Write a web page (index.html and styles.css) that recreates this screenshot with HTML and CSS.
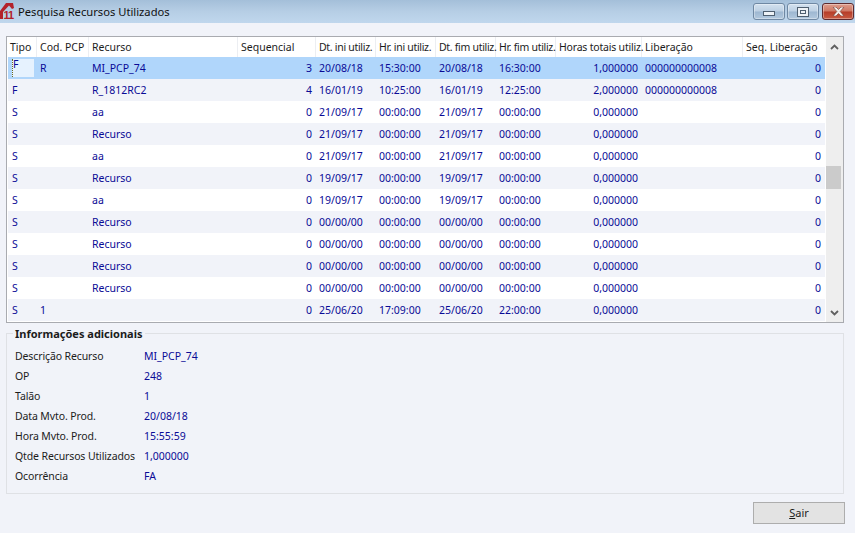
FILE: index.html
```html
<!DOCTYPE html>
<html lang="pt">
<head>
<meta charset="utf-8">
<title>Pesquisa Recursos Utilizados</title>
<link rel="stylesheet" href="styles.css">
</head>
<body>
<div class="window">
  <header class="titlebar">
    <svg class="app-icon" width="16" height="18" viewBox="0 0 16 18">
      <path d="M0 9 L6 1 L13 1 L14 6 L12 7 L9 3.5 L3 10 L3 17 L0 17 Z" fill="#b3222b"/>
      <text x="3.5" y="17" class="app-icon-text">11</text>
    </svg>
    <span class="title">Pesquisa Recursos Utilizados</span>
    <div class="controls">
      <div class="ctl"><span class="glyph-min"></span></div>
      <div class="ctl"><span class="glyph-max"></span></div>
      <div class="ctl ctl-close">
        <svg width="13" height="9" viewBox="0 0 13 9"><path d="M1 0 H4 L6.5 2.5 L9 0 H12 L8.2 4.5 L12 9 H9 L6.5 6.5 L4 9 H1 L4.8 4.5 Z" fill="#f2ece8" stroke="#6e3a32" stroke-width=".6"/></svg>
      </div>
    </div>
  </header>

  <section class="grid-box">
    <div class="grid-main">
      <div class="row head">
        <div>Tipo</div><div>Cod. PCP</div><div>Recurso</div><div>Sequencial</div><div class="u">Dt. ini utiliz.</div><div class="u">Hr. ini utiliz.</div><div class="u">Dt. fim utiliz.</div><div class="u">Hr. fim utiliz.</div><div class="u2">Horas totais utiliz.</div><div>Liberação</div><div>Seq. Liberação</div>
      </div>
      <div class="row sel"><div class="first"><span class="cursor">F</span></div><div>R</div><div>MI_PCP_74</div><div class="r">3</div><div>20/08/18</div><div>15:30:00</div><div>20/08/18</div><div>16:30:00</div><div class="r">1,000000</div><div>000000000008</div><div class="r">0</div></div>
      <div class="row alt"><div class="first">F</div><div></div><div>R_1812RC2</div><div class="r">4</div><div>16/01/19</div><div>10:25:00</div><div>16/01/19</div><div>12:25:00</div><div class="r">2,000000</div><div>000000000008</div><div class="r">0</div></div>
      <div class="row"><div class="first">S</div><div></div><div>aa</div><div class="r">0</div><div>21/09/17</div><div>00:00:00</div><div>21/09/17</div><div>00:00:00</div><div class="r">0,000000</div><div></div><div class="r">0</div></div>
      <div class="row alt"><div class="first">S</div><div></div><div>Recurso</div><div class="r">0</div><div>21/09/17</div><div>00:00:00</div><div>21/09/17</div><div>00:00:00</div><div class="r">0,000000</div><div></div><div class="r">0</div></div>
      <div class="row"><div class="first">S</div><div></div><div>aa</div><div class="r">0</div><div>21/09/17</div><div>00:00:00</div><div>21/09/17</div><div>00:00:00</div><div class="r">0,000000</div><div></div><div class="r">0</div></div>
      <div class="row alt"><div class="first">S</div><div></div><div>Recurso</div><div class="r">0</div><div>19/09/17</div><div>00:00:00</div><div>19/09/17</div><div>00:00:00</div><div class="r">0,000000</div><div></div><div class="r">0</div></div>
      <div class="row"><div class="first">S</div><div></div><div>aa</div><div class="r">0</div><div>19/09/17</div><div>00:00:00</div><div>19/09/17</div><div>00:00:00</div><div class="r">0,000000</div><div></div><div class="r">0</div></div>
      <div class="row alt"><div class="first">S</div><div></div><div>Recurso</div><div class="r">0</div><div>00/00/00</div><div>00:00:00</div><div>00/00/00</div><div>00:00:00</div><div class="r">0,000000</div><div></div><div class="r">0</div></div>
      <div class="row"><div class="first">S</div><div></div><div>Recurso</div><div class="r">0</div><div>00/00/00</div><div>00:00:00</div><div>00/00/00</div><div>00:00:00</div><div class="r">0,000000</div><div></div><div class="r">0</div></div>
      <div class="row alt"><div class="first">S</div><div></div><div>Recurso</div><div class="r">0</div><div>00/00/00</div><div>00:00:00</div><div>00/00/00</div><div>00:00:00</div><div class="r">0,000000</div><div></div><div class="r">0</div></div>
      <div class="row"><div class="first">S</div><div></div><div>Recurso</div><div class="r">0</div><div>00/00/00</div><div>00:00:00</div><div>00/00/00</div><div>00:00:00</div><div class="r">0,000000</div><div></div><div class="r">0</div></div>
      <div class="row alt"><div class="first">S</div><div>1</div><div></div><div class="r">0</div><div>25/06/20</div><div>17:09:00</div><div>25/06/20</div><div>22:00:00</div><div class="r">0,000000</div><div></div><div class="r">0</div></div>
    </div>
    <div class="scrollbar">
      <svg class="arrow" width="9" height="6" viewBox="0 0 9 6"><path d="M1 5 L4.5 1.5 L8 5" fill="none" stroke="#606060" stroke-width="1.8"/></svg>
      <div class="thumb"></div>
      <svg class="arrow" width="9" height="6" viewBox="0 0 9 6"><path d="M1 1 L4.5 4.5 L8 1" fill="none" stroke="#606060" stroke-width="1.8"/></svg>
    </div>
  </section>

  <fieldset class="info">
    <legend>Informações adicionais</legend>
    <dl class="info-list">
      <div class="info-row"><dt>Descrição Recurso</dt><dd>MI_PCP_74</dd></div>
      <div class="info-row"><dt>OP</dt><dd>248</dd></div>
      <div class="info-row"><dt>Talão</dt><dd>1</dd></div>
      <div class="info-row"><dt>Data Mvto. Prod.</dt><dd>20/08/18</dd></div>
      <div class="info-row"><dt>Hora Mvto. Prod.</dt><dd>15:55:59</dd></div>
      <div class="info-row"><dt>Qtde Recursos Utilizados</dt><dd>1,000000</dd></div>
      <div class="info-row"><dt>Ocorrência</dt><dd>FA</dd></div>
    </dl>
  </fieldset>

  <footer class="footer">
    <button class="btn" type="button"><u>S</u>air</button>
  </footer>
</div>
</body>
</html>
```
FILE: styles.css
```css
* { box-sizing: border-box; }
html, body { margin: 0; padding: 0; height: 100%; }
body {
  background: #f1f3f9;
  font-family: "Noto Sans", "DejaVu Sans", sans-serif;
  font-size: 10.5px;
  color: #1c1c1c;
  overflow: hidden;
}
.window { width: 855px; height: 533px; display: flex; flex-direction: column; }

.titlebar {
  height: 23px;
  flex: none;
  display: flex;
  align-items: flex-start;
  background: linear-gradient(180deg, #a4bfd9 0%, #b6cee5 50%, #c0d7ed 100%);
}
.app-icon { margin: 2px 0 0 0; flex: none; }
.app-icon-text { font: bold 11px "Liberation Sans", sans-serif; letter-spacing: -1px; fill: #b3222b; }
.title { margin: 4px 0 0 2px; font-size: 11.2px; line-height: 16px; color: #111; }
.controls { margin: 3px 0 0 auto; padding-right: 1px; display: flex; gap: 2px; }
.ctl {
  width: 32px; height: 17px;
  border: 1px solid #6f88a3;
  border-radius: 3px;
  background: linear-gradient(180deg, #d3e1ef 0%, #bdd0e3 48%, #9db7d1 52%, #b3c9de 100%);
  display: flex; align-items: center; justify-content: center;
  box-shadow: inset 0 0 0 1px rgba(255,255,255,.35);
}
.ctl-close {
  margin-left: 1px;
  border-color: #5d2a2e;
  background: linear-gradient(180deg, #dd9d8d 0%, #cf7763 48%, #b63c28 52%, #c85a42 100%);
}
.glyph-min { display: block; width: 12px; height: 5px; margin-top: 4px; background: #eef2f6; border: 1px solid #4f5f70; }
.glyph-max { display: block; width: 12px; height: 10px; background: #eef2f6; border: 1px solid #4f5f70; box-shadow: inset 0 0 0 2px #eef2f6, inset 0 0 0 3px #4f5f70; }

.grid-box {
  margin: 13px 11px 0 6px;
  width: 838px;
  height: 287px;
  flex: none;
  display: flex;
  background: #fff;
  border: 1px solid #a9abb0;
}
.grid-main { width: 818px; padding-left: 1px; flex: none; overflow: hidden; }
.row {
  display: grid;
  grid-template-columns: 29px 52px 149px 78px 60px 60px 60px 60px 86px 101px 82px;
  height: 22px;
  line-height: 21px;
  color: #0a0a96;
  background: #fff;
}
.row > div { padding: 1px 4px 0 3px; white-space: nowrap; overflow: hidden; }
.row > .r { text-align: right; }
.row.alt { background: #f1f3f9; }
.row.sel { background: #b0d6fb; }
.row.head { height: 20px; line-height: 20px; color: #1c1c1c; background: #fff; }
.row.head > div { padding: 0 0 0 3px; overflow: visible; border-right: 1px solid #eceef2; }
.row.head > div:first-child { padding-left: 2px; }
.row.head > div:last-child { border-right: 0; }
.row.head > .u { letter-spacing: -0.3px; }
.row.head > .u2 { letter-spacing: -0.2px; }
.row > .first { padding-left: 4px; }
.row.sel > .first { padding: 0 0 0 4px; }
.cursor {
  display: block;
  width: 22px; height: 18px; margin-top: 2px;
  line-height: 11px;
  background: #e6f2fe;
  border-left: 1px dotted #6a6a20;
}
.scrollbar {
  width: 17px;
  margin-left: 1px;
  background: #eeeeee;
  display: flex; flex-direction: column; align-items: center;
}
.arrow { flex: none; margin-top: 7px; }
.scrollbar .arrow:last-child { margin-top: auto; margin-bottom: 6px; }
.thumb {
  width: 15px; height: 23px; background: #cbcbcb;
  margin-top: 116px; flex: none;
  align-self: flex-start;
}

.info {
  margin: 4px 11px 0 6px;
  padding: 0;
  width: 838px;
  height: 167px;
  flex: none;
  border: 1px solid #dfe1e5;
  min-inline-size: 0;
}
.info legend { margin-left: 6px; padding: 0 2px; font-weight: bold; font-size: 11px; line-height: 13px; color: #1c1c1c; }
.info-list { margin: 6px 0 0; padding: 0; }
.info-row { display: flex; height: 20px; line-height: 20px; }
.info-row dt { width: 129px; margin-left: 8px; flex: none; letter-spacing: -0.12px; }
.info-row dd { margin: 0; color: #0a0a96; }

.footer { display: flex; justify-content: flex-end; padding: 8px 10px 0 0; }
.btn {
  width: 92px; height: 22px; padding: 0 0 2px;
  background: #e3e3e3;
  border: 1px solid #adadad;
  font: inherit; font-size: 11px; color: #1c1c1c;
}
```
